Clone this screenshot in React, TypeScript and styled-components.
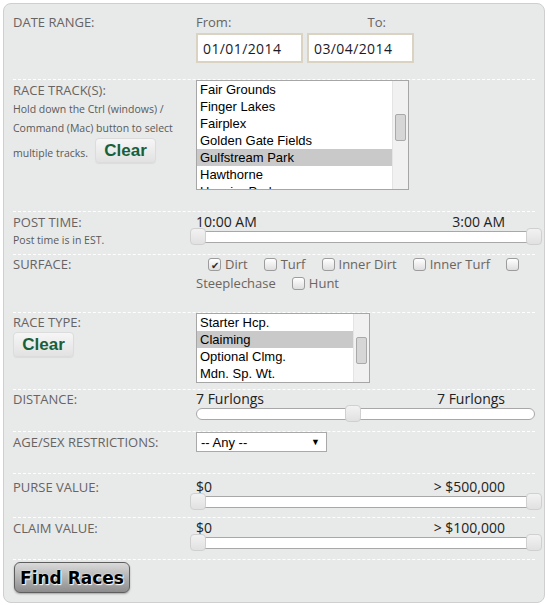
import React from 'react'
import styled, { createGlobalStyle } from 'styled-components';

const GlobalStyle = createGlobalStyle`
  body {
    margin: 0;
    background: #ffffff;
    font-family: "Open Sans", "Liberation Sans", sans-serif;
  }
`;

const tracks = ['Fair Grounds', 'Finger Lakes', 'Fairplex', 'Golden Gate Fields', 'Gulfstream Park', 'Hawthorne', 'Hoosier Park'];
const raceTypes = ['Starter Hcp.', 'Claiming', 'Optional Clmg.', 'Mdn. Sp. Wt.'];
const surfaces = [
  { name: 'Dirt', checked: true },
  { name: 'Turf', checked: false },
  { name: 'Inner Dirt', checked: false },
  { name: 'Inner Turf', checked: false },
  { name: 'Steeplechase', checked: false },
  { name: 'Hunt', checked: false },
];

interface RangeProps {
  from: string;
  to: string;
  single?: number; // handle position in %, for one-handle sliders
}

function RangeSlider({ from, to, single }: RangeProps) {
  return (
    <div>
      <RangeLabels>
        <RangeValue>{from}</RangeValue>
        <RangeValue>{to}</RangeValue>
      </RangeLabels>
      <Track $rounded={single !== undefined}>
        {single === undefined ? (
          <>
            <Handle $side="left" />
            <Handle $side="right" />
          </>
        ) : (
          <Handle style={{ left: `${single}%` }} />
        )}
      </Track>
    </div>
  );
}

function ListBox({ items, selected, width, height, thumbTop }: { items: string[]; selected: string; width: number; height: number; thumbTop: number }) {
  return (
    <List $w={width} $h={height}>
      <ListItems>
        {items.map((it) => (
          <ListItem key={it} $selected={it === selected}>{it}</ListItem>
        ))}
      </ListItems>
      <ScrollBar>
        <Thumb style={{ top: thumbTop }} />
      </ScrollBar>
    </List>
  );
}

function App() {
  return (
    <>
      <GlobalStyle />
      <Panel>
        <Row $h={76} $pt={9}>
          <Label>DATE RANGE:</Label>
          <div>
            <FieldLabels>
              <span>From:</span>
              <span>To:</span>
            </FieldLabels>
            <DateInputs>
              <DateBox>01/01/2014</DateBox>
              <DateBox>03/04/2014</DateBox>
            </DateInputs>
          </div>
        </Row>

        <Row $h={132} $pt={0}>
          <div>
            <Label $lh={20}>RACE TRACK(S):</Label>
            <Help>
              Hold down the Ctrl (windows) /<br />
              Command (Mac) button to select
            </Help>
            <HelpLast>
              <Help>multiple tracks.</Help>
              <ClearButton $ml={7}>Clear</ClearButton>
            </HelpLast>
          </div>
          <ListBox items={tracks} selected="Gulfstream Park" width={213} height={110} thumbTop={33} />
        </Row>

        <Row $h={43} $pt={1}>
          <div>
            <Label>POST TIME:</Label>
            <Help>Post time is in EST.</Help>
          </div>
          <RangeSlider from="10:00 AM" to="3:00 AM" />
        </Row>

        <Row $h={58} $pt={0}>
          <Label>SURFACE:</Label>
          <Checks>
            {surfaces.map((s, i) => (
              <React.Fragment key={s.name}>
                <CheckBox $checked={s.checked} $first={i === 0}>{s.checked ? '✔' : ''}</CheckBox>
                <CheckText>{s.name}</CheckText>
              </React.Fragment>
            ))}
          </Checks>
        </Row>

        <Row $h={77} $pt={0}>
          <div>
            <Label>RACE TYPE:</Label>
            <ClearButton $mt={1}>Clear</ClearButton>
          </div>
          <ListBox items={raceTypes} selected="Claiming" width={174} height={70} thumbTop={23} />
        </Row>

        <Row $h={42} $pt={0}>
          <Label>DISTANCE:</Label>
          <RangeSlider from="7 Furlongs" to="7 Furlongs" single={46.3} />
        </Row>

        <Row $h={42} $pt={0}>
          <Label $lh={20}>AGE/SEX RESTRICTIONS:</Label>
          <div>
            <Select>
              <span>-- Any --</span>
              <Caret>▼</Caret>
            </Select>
          </div>
        </Row>

        <Row $h={44} $pt={4}>
          <Label>PURSE VALUE:</Label>
          <RangeSlider from="$0" to="> $500,000" />
        </Row>

        <Row $h={42} $pt={1}>
          <Label>CLAIM VALUE:</Label>
          <RangeSlider from="$0" to="> $100,000" />
        </Row>

        <Footer>
          <FindButton>Find Races</FindButton>
        </Footer>
      </Panel>
    </>
  );
}

const Panel = styled.div`
  margin: 3px;
  width: 542px;
  box-sizing: border-box;
  padding: 0 9px 0 9px;
  background: #e8e9e9;
  border: 1px solid #cfcfcf;
  border-radius: 8px;
`;

const Row = styled.div<{ $h: number; $pt: number }>`
  display: grid;
  grid-template-columns: 183px 1fr;
  align-items: start;
  height: ${(p) => p.$h}px;
  box-sizing: border-box;
  padding-top: ${(p) => p.$pt}px;
  border-bottom: 1px dashed #ffffff;
`;

const Label = styled.div<{ $lh?: number }>`
  font-size: 13px;
  line-height: ${(p) => p.$lh ?? 18}px;
  color: #666464;
`;

const Help = styled.div`
  font-size: 10.5px;
  line-height: 19px;
  color: #5a5a5a;
`;

const HelpLast = styled.div`
  display: flex;
  align-items: flex-end;
`;

const ClearButton = styled.div<{ $ml?: number; $mt?: number }>`
  width: 61px;
  height: 25px;
  margin-left: ${(p) => p.$ml ?? 0}px;
  margin-top: ${(p) => p.$mt ?? 0}px;
  box-sizing: border-box;
  display: flex;
  align-items: center;
  justify-content: center;
  font-family: "Liberation Sans", Arial, sans-serif;
  font-weight: bold;
  font-size: 17px;
  color: #17603a;
  background: linear-gradient(#f6f6f6, #e2e2e2);
  border: 1px solid #dcdcdc;
  border-radius: 4px;
  box-shadow: 0 1px 1px rgba(0, 0, 0, 0.06);
`;

const FieldLabels = styled.div`
  display: flex;
  justify-content: space-between;
  width: 190px;
  font-size: 13px;
  line-height: 18px;
  color: #666464;
`;

const DateInputs = styled.div`
  display: flex;
  gap: 4px;
  margin-top: 2px;
`;

const DateBox = styled.div`
  width: 107px;
  height: 30px;
  box-sizing: border-box;
  padding-left: 5px;
  display: flex;
  align-items: center;
  background: #ffffff;
  border: 2px solid #dad3c1;
  font-size: 14px;
  letter-spacing: 0.4px;
  color: #1a1a2a;
`;

const List = styled.div<{ $w: number; $h: number }>`
  width: ${(p) => p.$w}px;
  height: ${(p) => p.$h}px;
  box-sizing: border-box;
  border: 1px solid #a6a6a6;
  background: #ffffff;
  display: flex;
  overflow: hidden;
`;

const ListItems = styled.div`
  flex: 1;
`;

const ListItem = styled.div<{ $selected: boolean }>`
  height: 17px;
  line-height: 17px;
  padding-left: 3px;
  font-family: "Liberation Sans", Arial, sans-serif;
  font-size: 13px;
  color: #000000;
  white-space: nowrap;
  background: ${(p) => (p.$selected ? '#c9c9c9' : 'transparent')};
`;

const ScrollBar = styled.div`
  position: relative;
  width: 15px;
  background: #f1f1f1;
  border-left: 1px solid #e4e4e4;
`;

const Thumb = styled.div`
  position: absolute;
  left: 2px;
  width: 9px;
  height: 25px;
  background: #d6d6d6;
  border: 1px solid #a9a9a9;
  border-radius: 2px;
`;

const RangeLabels = styled.div`
  display: flex;
  justify-content: space-between;
  width: 309px;
`;

const RangeValue = styled.span`
  font-size: 14px;
  line-height: 18px;
  color: #222222;
`;

const Track = styled.div<{ $rounded: boolean }>`
  position: relative;
  height: 12px;
  box-sizing: border-box;
  margin-left: ${(p) => (p.$rounded ? 0 : 1)}px;
  background: #ffffff;
  border: 1px solid #a8a8a8;
  border-radius: ${(p) => (p.$rounded ? 6 : 0)}px;
`;

const Handle = styled.div<{ $side?: 'left' | 'right' }>`
  position: absolute;
  top: -4px;
  width: 16px;
  height: 17px;
  box-sizing: border-box;
  margin-left: -8px;
  ${(p) => (p.$side === 'left' ? 'left: 0;' : '')}
  ${(p) => (p.$side === 'right' ? 'left: 100%;' : '')}
  background: linear-gradient(#f2f2f2, #e1e1e1);
  border: 1px solid #d0d0d0;
  border-radius: 4px;
`;

const Checks = styled.div`
  display: flex;
  flex-wrap: wrap;
  align-items: center;
  align-content: flex-start;
`;

const CheckBox = styled.span<{ $checked: boolean; $first: boolean }>`
  width: 13px;
  height: 13px;
  box-sizing: border-box;
  margin-left: ${(p) => (p.$first ? 12 : 0)}px;
  margin-right: 4px;
  display: flex;
  align-items: center;
  justify-content: center;
  font-size: 10px;
  color: #2a2a2a;
  background: linear-gradient(#ffffff, #dedede);
  border: 1px solid #9c9c9c;
  border-radius: 3px;
`;

const CheckText = styled.span`
  margin-right: 16px;
  font-size: 13px;
  line-height: 19px;
  color: #6b6560;
`;

const Select = styled.div`
  width: 131px;
  height: 20px;
  box-sizing: border-box;
  padding: 0 6px 0 4px;
  display: flex;
  align-items: center;
  justify-content: space-between;
  background: #ffffff;
  border: 1px solid #a9a9a9;
  font-family: "Liberation Sans", Arial, sans-serif;
  font-size: 13px;
  color: #000000;
`;

const Caret = styled.span`
  font-size: 9px;
`;

const Footer = styled.div`
  height: 42px;
  box-sizing: border-box;
  padding-top: 2px;
`;

const FindButton = styled.div`
  width: 116px;
  height: 31px;
  margin-left: 1px;
  box-sizing: border-box;
  display: flex;
  align-items: center;
  justify-content: center;
  font-family: "DejaVu Sans", Verdana, sans-serif;
  font-weight: bold;
  font-size: 17px;
  color: #000000;
  text-shadow: 0 0 2px #ffffff, 1px 1px 1px #ffffff;
  background: linear-gradient(#dadada, #8c8c8c);
  border: 1px solid #5e5e5e;
  border-radius: 6px;
  box-shadow: 0 1px 2px rgba(0, 0, 0, 0.3);
`;

export default App
